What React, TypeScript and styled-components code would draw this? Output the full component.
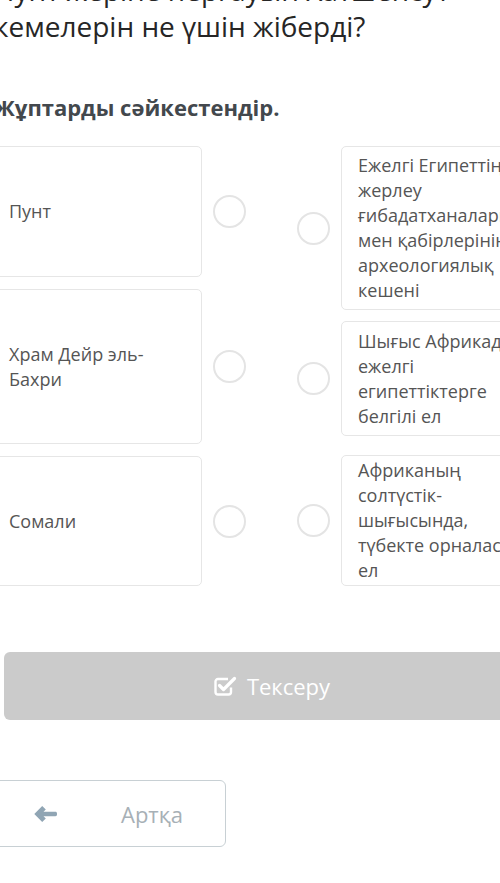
import styled, { createGlobalStyle } from 'styled-components';

const GlobalStyle = createGlobalStyle`
  html, body {
    margin: 0;
    padding: 0;
    background: #ffffff;
    overflow: hidden;
  }
  body {
    font-family: 'Open Sans', 'Noto Sans', sans-serif;
  }
`;

const Page = styled.div`
  width: 560px;
  margin-left: -8px;
`;

const Title = styled.h1`
  margin: -28px 0 0 2px;
  width: 470px;
  font-size: 28px;
  line-height: 36px;
  font-weight: 400;
  color: #262626;
`;

const Instruction = styled.h2`
  margin: 48px 0 0 2px;
  font-size: 22px;
  line-height: 30px;
  font-weight: 700;
  color: #43484d;
`;

const Board = styled.div`
  display: flex;
  gap: 51px;
  margin-top: 24px;
`;

const Column = styled.div`
  display: flex;
  flex-direction: column;
  height: 440px;
`;

const Pair = styled.div<{ $gap: number }>`
  display: flex;
  align-items: center;
  gap: 11px;
  margin-top: ${p => p.$gap}px;
`;

const Card = styled.div<{ $h: number }>`
  box-sizing: border-box;
  display: flex;
  align-items: center;
  width: 210px;
  height: ${p => p.$h}px;
  padding: 0 16px;
  border: 1.5px solid #e6e6e6;
  border-radius: 5px;
  font-size: 18px;
  line-height: 25px;
  color: #555555;
`;

const Dot = styled.span`
  box-sizing: border-box;
  flex: none;
  width: 33px;
  height: 33px;
  border-radius: 50%;
  border: 2.5px solid #e4e4e4;
`;

const CheckButton = styled.button`
  display: flex;
  align-items: center;
  justify-content: center;
  gap: 10px;
  width: 536px;
  height: 68px;
  margin: 66px 0 0 12px;
  border: none;
  border-radius: 6px;
  background: #cbcbcb;
  color: #ffffff;
  font-family: inherit;
  font-size: 22px;
`;

const BackButton = styled.button`
  box-sizing: border-box;
  display: flex;
  align-items: center;
  width: 234px;
  height: 67px;
  margin-top: 60px;
  padding: 0 0 0 41px;
  border: 1.5px solid #c8d0d4;
  border-radius: 6px;
  background: #ffffff;
  color: #a7b0b6;
  font-family: inherit;
  font-size: 22px;
`;

const BackLabel = styled.span`
  margin-left: 64px;
`;

const lefts = [
  { text: 'Пунт', h: 131, gap: 0 },
  { text: 'Храм Дейр эль-Бахри', h: 155, gap: 12 },
  { text: 'Сомали', h: 130, gap: 12 },
];

const rights = [
  { text: 'Ежелгі Египеттің жерлеу ғибадатханалары мен қабірлерінің археологиялық кешені', h: 164, gap: 0 },
  { text: 'Шығыс Африкадағы ежелгі египеттіктерге белгілі ел', h: 115, gap: 11 },
  { text: 'Африканың солтүстік-шығысында, түбекте орналасқан ел', h: 131, gap: 19 },
];

function CheckIcon() {
  return (
    <svg width="23" height="22" viewBox="0 0 23 22" fill="none" stroke="#ffffff" strokeWidth="2.4">
      <path d="M17 12.5V17a2.5 2.5 0 0 1-2.5 2.5H4A2.5 2.5 0 0 1 1.5 17V6.5A2.5 2.5 0 0 1 4 4h10" />
      <path d="M5.5 10.5l4 4L20.5 3.5" strokeWidth="3.2" strokeLinecap="round" strokeLinejoin="round" />
    </svg>
  );
}

function ArrowIcon() {
  return (
    <svg width="23" height="18" viewBox="0 0 23 18" fill="#90a5b4">
      <path d="M0.3 9L8.2 1l3.6 3.6-2.3 2.2H21.4c0.9 0 1.6 0.7 1.6 1.6v1.2c0 0.9-0.7 1.6-1.6 1.6H9.5l2.3 2.2L8.2 17z" />
    </svg>
  );
}

export default function App() {
  return (
    <>
      <GlobalStyle />
      <Page>
        <Title>Пунт жеріне перғауын Хатшепсут кемелерін не үшін жіберді?</Title>
        <Instruction>Жұптарды сәйкестендір.</Instruction>
        <Board>
          <Column>
            {lefts.map(item => (
              <Pair key={item.text} $gap={item.gap}>
                <Card $h={item.h}>{item.text}</Card>
                <Dot />
              </Pair>
            ))}
          </Column>
          <Column>
            {rights.map(item => (
              <Pair key={item.text} $gap={item.gap}>
                <Dot />
                <Card $h={item.h}>{item.text}</Card>
              </Pair>
            ))}
          </Column>
        </Board>
        <CheckButton>
          <CheckIcon />
          Тексеру
        </CheckButton>
        <BackButton>
          <ArrowIcon />
          <BackLabel>Артқа</BackLabel>
        </BackButton>
      </Page>
    </>
  );
}
